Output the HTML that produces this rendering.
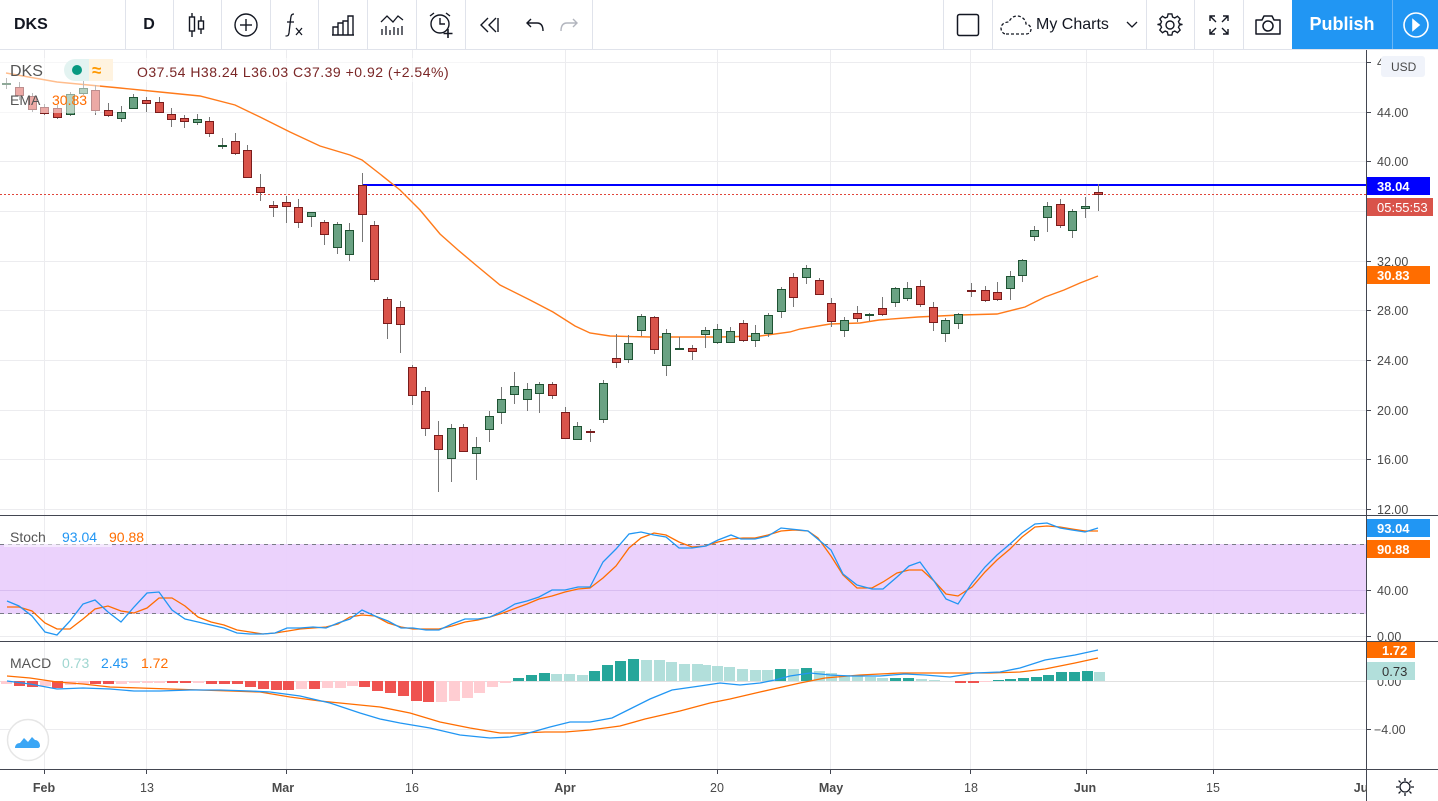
<!DOCTYPE html>
<html><head><meta charset="utf-8">
<style>
html,body{margin:0;padding:0;background:#fff;width:1438px;height:801px;overflow:hidden;font-family:"Liberation Sans",sans-serif;}
#tb{position:absolute;left:0;top:0;width:1438px;height:49px;border-bottom:1px solid #e0e3eb;background:#fff;}
.sep{position:absolute;top:0;width:1px;height:49px;background:#e0e3eb;}
.ic{position:absolute;top:0;height:49px;display:flex;align-items:center;justify-content:center;}
svg text{font-family:"Liberation Sans",sans-serif;}
</style></head><body>
<div id="tb">
 <div class="ic" style="left:14px;font-weight:bold;font-size:16px;color:#131722">DKS</div>
 <div class="sep" style="left:125px"></div>
 <div class="ic" style="left:125px;width:48px;font-size:16px;font-weight:bold;color:#131722">D</div>
 <div class="sep" style="left:173px"></div>
 <div class="ic" style="left:173px;width:48px"><svg width="24" height="28" viewBox="0 0 24 28" fill="none" stroke="#131722" stroke-width="1.4"><line x1="7" y1="2" x2="7" y2="26"/><rect x="4.5" y="6" width="5" height="14" fill="#fff"/><line x1="16" y1="5" x2="16" y2="23"/><rect x="13.5" y="10" width="5" height="8" fill="#fff"/></svg></div>
 <div class="sep" style="left:221px"></div>
 <div class="ic" style="left:221px;width:49px"><svg width="26" height="26" fill="none" stroke="#131722" stroke-width="1.4"><circle cx="13" cy="13" r="11"/><line x1="13" y1="7" x2="13" y2="19"/><line x1="7" y1="13" x2="19" y2="13"/></svg></div>
 <div class="sep" style="left:270px"></div>
 <div class="ic" style="left:270px;width:48px"><svg width="24" height="26" fill="none" stroke="#131722" stroke-width="1.3"><path d="M12 2c-3 0-3 2-3.5 6L7 21c-.5 3-1.5 3-3.5 3"/><line x1="5" y1="10" x2="12" y2="10"/><path d="M14 16l6 7M20 16l-6 7"/></svg></div>
 <div class="sep" style="left:318px"></div>
 <div class="ic" style="left:318px;width:49px"><svg width="24" height="24" fill="none" stroke="#131722" stroke-width="1.4"><path d="M2 22V14h5v8M7 22V10h5v12M12 22V8h5v14M17 22V3h5v19M1 22h22"/></svg></div>
 <div class="sep" style="left:367px"></div>
 <div class="ic" style="left:367px;width:49px"><svg width="26" height="24" fill="none" stroke="#131722" stroke-width="1.3"><path d="M2 9l6-6 6 6 5-6 5 4"/><path d="M3 16v6M7 13v9M11 17v5M15 14v8M19 15v7M23 13v9"/></svg></div>
 <div class="sep" style="left:416px"></div>
 <div class="ic" style="left:416px;width:49px"><svg width="28" height="28" fill="none" stroke="#131722" stroke-width="1.4"><circle cx="13" cy="13" r="9"/><path d="M13 7v6h5M3 5l4-3M23 5l-4-3"/><path d="M21 18v9M16.5 22.5h9" stroke-width="1.6"/></svg></div>
 <div class="sep" style="left:465px"></div>
 <div class="ic" style="left:465px;width:48px"><svg width="22" height="18" fill="none" stroke="#131722" stroke-width="1.4"><path d="M10 2L3 9l7 7M18 2l-7 7 7 7"/><line x1="20" y1="2" x2="20" y2="16"/></svg></div>
 <div class="ic" style="left:522px;width:26px"><svg width="20" height="16" fill="none" stroke="#131722" stroke-width="1.4"><path d="M6 2L2 6l4 4M2 6h10c4 0 6 3 6 8"/></svg></div>
 <div class="ic" style="left:556px;width:26px"><svg width="20" height="16" fill="none" stroke="#b2b5be" stroke-width="1.4"><path d="M14 2l4 4-4 4M18 6H8c-4 0-6 3-6 8"/></svg></div>
 <div class="sep" style="left:592px"></div>
 <div class="sep" style="left:943px"></div>
 <div class="ic" style="left:943px;width:49px"><svg width="24" height="24" fill="none" stroke="#131722" stroke-width="1.5"><rect x="1.5" y="1.5" width="21" height="21" rx="2"/></svg></div>
 <div class="sep" style="left:992px"></div>
 <div class="ic" style="left:1000px;width:32px"><svg width="32" height="22" fill="none" stroke="#131722" stroke-width="1.3" stroke-dasharray="3,2"><path d="M6 20h20c4 0 5-3 5-5s-2-5-5-5c0-4-4-8-9-8-4 0-7 3-8 6-5 0-8 3-8 6s2 6 5 6z"/></svg></div>
 <div class="ic" style="left:1036px;font-size:16px;color:#131722">My Charts</div>
 <div class="ic" style="left:1124px;width:16px"><svg width="12" height="8" fill="none" stroke="#131722" stroke-width="1.3"><path d="M1 1l5 5 5-5"/></svg></div>
 <div class="sep" style="left:1146px"></div>
 <div class="ic" style="left:1146px;width:48px"><svg width="26" height="26" viewBox="0 0 26 26" fill="none" stroke="#131722" stroke-width="1.4"><path d="M11 2h4l.7 3.2 2.3 1 2.8-1.8 2.8 2.8-1.8 2.8 1 2.3L26 13v0l-3.2 .7-1 2.3 1.8 2.8-2.8 2.8-2.8-1.8-2.3 1L15 24h-4l-.7-3.2-2.3-1-2.8 1.8-2.8-2.8 1.8-2.8-1-2.3L0 13l3.2-.7 1-2.3-1.8-2.8 2.8-2.8 2.8 1.8 2.3-1z" transform="translate(0.5,0) scale(0.96)"/><circle cx="13" cy="13" r="4"/></svg></div>
 <div class="sep" style="left:1194px"></div>
 <div class="ic" style="left:1194px;width:49px"><svg width="22" height="22" fill="none" stroke="#131722" stroke-width="1.4"><path d="M2 7V2h5M2 2l6 6M20 7V2h-5M20 2l-6 6M2 15v5h5M2 20l6-6M20 15v5h-5M20 20l-6-6"/></svg></div>
 <div class="sep" style="left:1243px"></div>
 <div class="ic" style="left:1243px;width:49px"><svg width="28" height="22" fill="none" stroke="#131722" stroke-width="1.5"><path d="M2 6h6l2-4h8l2 4h6v14H2z" stroke-linejoin="round"/><circle cx="14" cy="12" r="5"/></svg></div>
 <div style="position:absolute;left:1292px;top:0;width:100px;height:49px;background:#2196f3;color:#fff;font-size:18px;font-weight:bold;display:flex;align-items:center;justify-content:center">Publish</div>
 <div style="position:absolute;left:1392px;top:0;width:1px;height:49px;background:#6bb6f5"></div>
 <div style="position:absolute;left:1393px;top:0;width:45px;height:49px;background:#2196f3;display:flex;align-items:center;justify-content:center"><svg width="28" height="28" fill="none" stroke="#fff" stroke-width="1.6"><circle cx="14" cy="14" r="12"/><path d="M11 9l6 5-6 5z" fill="#fff"/></svg></div>
</div>

<svg width="1438" height="801" style="position:absolute;left:0;top:0" xmlns="http://www.w3.org/2000/svg">
<g stroke="#ececef" stroke-width="1">
<line x1="0" y1="62.5" x2="1366" y2="62.5"/><line x1="0" y1="112.5" x2="1366" y2="112.5"/><line x1="0" y1="161.5" x2="1366" y2="161.5"/><line x1="0" y1="211.5" x2="1366" y2="211.5"/><line x1="0" y1="261.5" x2="1366" y2="261.5"/><line x1="0" y1="310.5" x2="1366" y2="310.5"/><line x1="0" y1="360.5" x2="1366" y2="360.5"/><line x1="0" y1="410.5" x2="1366" y2="410.5"/><line x1="0" y1="459.5" x2="1366" y2="459.5"/><line x1="0" y1="509.5" x2="1366" y2="509.5"/>
<line x1="0" y1="636.5" x2="1366" y2="636.5"/><line x1="0" y1="729.5" x2="1366" y2="729.5"/>
<line x1="44.5" y1="50" x2="44.5" y2="770"/><line x1="146.5" y1="50" x2="146.5" y2="770"/><line x1="286.5" y1="50" x2="286.5" y2="770"/><line x1="412.5" y1="50" x2="412.5" y2="770"/><line x1="565.5" y1="50" x2="565.5" y2="770"/><line x1="717.5" y1="50" x2="717.5" y2="770"/><line x1="830.5" y1="50" x2="830.5" y2="770"/><line x1="970.5" y1="50" x2="970.5" y2="770"/><line x1="1086.5" y1="50" x2="1086.5" y2="770"/><line x1="1213.5" y1="50" x2="1213.5" y2="770"/>
</g>

<rect x="0" y="544" width="1366" height="70" fill="#ead0fc" opacity="0.95"/>
<line x1="0" y1="590.5" x2="1366" y2="590.5" stroke="#d8bdf0"/>
<line x1="0" y1="544.5" x2="1366" y2="544.5" stroke="#787b86" stroke-dasharray="4,4"/>
<line x1="0" y1="613.5" x2="1366" y2="613.5" stroke="#787b86" stroke-dasharray="4,4"/>

<line x1="0" y1="194.5" x2="1366" y2="194.5" stroke="#e0453a" stroke-dasharray="2,2"/>
<line x1="362" y1="185" x2="1366" y2="185" stroke="#0000ff" stroke-width="2"/>

<polyline fill="none" stroke="#ff7a1a" stroke-width="1.4" points="6,73 57,82 120,88 160,92 200,96 235,105 260,117 290,132 320,146 350,155 362,160 380,174 400,190 420,210 440,234 458,250 477,266 500,285 530,300 553,312 575,326 590,333 610,336 650,337 680,337 720,337 760,336 790,332 800,329 830,324 860,323 879,320 918,317 960,315 997,314 1025,307 1045,297 1064,290 1080,283 1098,276"/>

<g stroke="#777" stroke-width="1">
<line x1="6.5" y1="78" x2="6.5" y2="89"/><line x1="19.5" y1="82" x2="19.5" y2="100"/><line x1="32.5" y1="93" x2="32.5" y2="112"/><line x1="44.5" y1="104" x2="44.5" y2="115"/><line x1="57.5" y1="105" x2="57.5" y2="119"/><line x1="70.5" y1="92" x2="70.5" y2="116"/><line x1="83.5" y1="78" x2="83.5" y2="95"/><line x1="95.5" y1="85" x2="95.5" y2="115"/><line x1="108.5" y1="103" x2="108.5" y2="117"/><line x1="121.5" y1="106" x2="121.5" y2="122"/><line x1="133.5" y1="94" x2="133.5" y2="109"/><line x1="146.5" y1="97" x2="146.5" y2="112"/><line x1="159.5" y1="97" x2="159.5" y2="113"/><line x1="171.5" y1="108" x2="171.5" y2="127"/><line x1="184.5" y1="115" x2="184.5" y2="128"/><line x1="197.5" y1="114" x2="197.5" y2="125"/><line x1="209.5" y1="117" x2="209.5" y2="137"/><line x1="222.5" y1="138" x2="222.5" y2="149"/><line x1="235.5" y1="133" x2="235.5" y2="155"/><line x1="247.5" y1="145" x2="247.5" y2="178"/><line x1="260.5" y1="174" x2="260.5" y2="201"/><line x1="273.5" y1="201" x2="273.5" y2="217"/><line x1="286.5" y1="196" x2="286.5" y2="223"/><line x1="298.5" y1="199" x2="298.5" y2="228"/><line x1="311.5" y1="212" x2="311.5" y2="227"/><line x1="324.5" y1="220" x2="324.5" y2="245"/><line x1="337.5" y1="222" x2="337.5" y2="254"/><line x1="349.5" y1="223" x2="349.5" y2="261"/><line x1="362.5" y1="173" x2="362.5" y2="242"/><line x1="374.5" y1="221" x2="374.5" y2="282"/><line x1="387.5" y1="297" x2="387.5" y2="339"/><line x1="400.5" y1="301" x2="400.5" y2="353"/><line x1="412.5" y1="365" x2="412.5" y2="405"/><line x1="425.5" y1="387" x2="425.5" y2="436"/><line x1="438.5" y1="421" x2="438.5" y2="492"/><line x1="451.5" y1="424" x2="451.5" y2="482"/><line x1="463.5" y1="424" x2="463.5" y2="452"/><line x1="476.5" y1="437" x2="476.5" y2="480"/><line x1="489.5" y1="411" x2="489.5" y2="442"/><line x1="501.5" y1="387" x2="501.5" y2="424"/><line x1="514.5" y1="372" x2="514.5" y2="404"/><line x1="527.5" y1="383" x2="527.5" y2="411"/><line x1="539.5" y1="382" x2="539.5" y2="413"/><line x1="552.5" y1="382" x2="552.5" y2="399"/><line x1="565.5" y1="407" x2="565.5" y2="439"/><line x1="577.5" y1="422" x2="577.5" y2="439"/><line x1="590.5" y1="429" x2="590.5" y2="442"/><line x1="603.5" y1="380" x2="603.5" y2="423"/><line x1="616.5" y1="334" x2="616.5" y2="368"/><line x1="628.5" y1="335" x2="628.5" y2="363"/><line x1="641.5" y1="314" x2="641.5" y2="336"/><line x1="654.5" y1="316" x2="654.5" y2="354"/><line x1="666.5" y1="329" x2="666.5" y2="376"/><line x1="679.5" y1="337" x2="679.5" y2="350"/><line x1="692.5" y1="345" x2="692.5" y2="360"/><line x1="705.5" y1="327" x2="705.5" y2="348"/><line x1="717.5" y1="324" x2="717.5" y2="344"/><line x1="730.5" y1="327" x2="730.5" y2="342"/><line x1="743.5" y1="320" x2="743.5" y2="342"/><line x1="755.5" y1="325" x2="755.5" y2="347"/><line x1="768.5" y1="313" x2="768.5" y2="337"/><line x1="781.5" y1="287" x2="781.5" y2="318"/><line x1="793.5" y1="273" x2="793.5" y2="307"/><line x1="806.5" y1="265" x2="806.5" y2="284"/><line x1="819.5" y1="278" x2="819.5" y2="294"/><line x1="831.5" y1="298" x2="831.5" y2="327"/><line x1="844.5" y1="317" x2="844.5" y2="337"/><line x1="857.5" y1="306" x2="857.5" y2="322"/><line x1="869.5" y1="313" x2="869.5" y2="321"/><line x1="882.5" y1="297" x2="882.5" y2="316"/><line x1="895.5" y1="287" x2="895.5" y2="307"/><line x1="907.5" y1="282" x2="907.5" y2="301"/><line x1="920.5" y1="280" x2="920.5" y2="307"/><line x1="933.5" y1="302" x2="933.5" y2="331"/><line x1="945.5" y1="318" x2="945.5" y2="342"/><line x1="958.5" y1="313" x2="958.5" y2="329"/><line x1="971.5" y1="283" x2="971.5" y2="297"/><line x1="985.5" y1="286" x2="985.5" y2="302"/><line x1="997.5" y1="282" x2="997.5" y2="301"/><line x1="1010.5" y1="271" x2="1010.5" y2="300"/><line x1="1022.5" y1="259" x2="1022.5" y2="282"/><line x1="1034.5" y1="226" x2="1034.5" y2="241"/><line x1="1047.5" y1="202" x2="1047.5" y2="232"/><line x1="1060.5" y1="199" x2="1060.5" y2="228"/><line x1="1072.5" y1="209" x2="1072.5" y2="238"/><line x1="1085.5" y1="197" x2="1085.5" y2="218"/><line x1="1098.5" y1="184" x2="1098.5" y2="211"/>
</g>
<g stroke-width="1">
<g fill="#d9534a" stroke="#7a1c1c">
<rect x="15.5" y="87.5" width="8" height="8"/><rect x="28.5" y="96.5" width="8" height="13"/><rect x="40.5" y="107.5" width="8" height="6"/><rect x="53.5" y="108.5" width="8" height="9"/><rect x="91.5" y="90.5" width="8" height="20"/><rect x="104.5" y="110.5" width="8" height="5"/><rect x="142.5" y="100.5" width="8" height="3"/><rect x="155.5" y="102.5" width="8" height="10"/><rect x="167.5" y="114.5" width="8" height="5"/><rect x="180.5" y="118.5" width="8" height="3"/><rect x="205.5" y="121.5" width="8" height="12"/><rect x="231.5" y="141.5" width="8" height="12"/><rect x="243.5" y="150.5" width="8" height="27"/><rect x="256.5" y="187.5" width="8" height="5"/><rect x="269.5" y="205.5" width="8" height="2"/><rect x="282.5" y="202.5" width="8" height="4"/><rect x="294.5" y="207.5" width="8" height="15"/><rect x="320.5" y="222.5" width="8" height="12"/><rect x="358.5" y="185.5" width="8" height="29"/><rect x="370.5" y="225.5" width="8" height="54"/><rect x="383.5" y="299.5" width="8" height="24"/><rect x="396.5" y="307.5" width="8" height="17"/><rect x="408.5" y="367.5" width="8" height="28"/><rect x="421.5" y="391.5" width="8" height="37"/><rect x="434.5" y="435.5" width="8" height="14"/><rect x="459.5" y="427.5" width="8" height="24"/><rect x="548.5" y="384.5" width="8" height="11"/><rect x="561.5" y="412.5" width="8" height="26"/><rect x="586.5" y="431.5" width="8" height="1"/><rect x="612.5" y="358.5" width="8" height="4"/><rect x="650.5" y="317.5" width="8" height="32"/><rect x="688.5" y="348.5" width="8" height="3"/><rect x="739.5" y="323.5" width="8" height="17"/><rect x="789.5" y="277.5" width="8" height="20"/><rect x="815.5" y="280.5" width="8" height="14"/><rect x="827.5" y="303.5" width="8" height="18"/><rect x="853.5" y="313.5" width="8" height="5"/><rect x="878.5" y="308.5" width="8" height="6"/><rect x="916.5" y="286.5" width="8" height="18"/><rect x="929.5" y="307.5" width="8" height="15"/><rect x="967.5" y="290.5" width="8" height="1"/><rect x="981.5" y="290.5" width="8" height="10"/><rect x="993.5" y="292.5" width="8" height="7"/><rect x="1056.5" y="204.5" width="8" height="21"/><rect x="1094.5" y="192.5" width="8" height="2"/>
</g>
<g fill="#6aa283" stroke="#1e5232">
<rect x="2.5" y="83.5" width="8" height="1"/><rect x="66.5" y="94.5" width="8" height="20"/><rect x="79.5" y="88.5" width="8" height="5"/><rect x="117.5" y="112.5" width="8" height="6"/><rect x="129.5" y="97.5" width="8" height="11"/><rect x="193.5" y="119.5" width="8" height="3"/><rect x="218.5" y="145.5" width="8" height="1"/><rect x="307.5" y="212.5" width="8" height="4"/><rect x="333.5" y="224.5" width="8" height="23"/><rect x="345.5" y="230.5" width="8" height="24"/><rect x="447.5" y="428.5" width="8" height="30"/><rect x="472.5" y="447.5" width="8" height="6"/><rect x="485.5" y="416.5" width="8" height="13"/><rect x="497.5" y="399.5" width="8" height="13"/><rect x="510.5" y="386.5" width="8" height="8"/><rect x="523.5" y="389.5" width="8" height="10"/><rect x="535.5" y="384.5" width="8" height="9"/><rect x="573.5" y="426.5" width="8" height="13"/><rect x="599.5" y="383.5" width="8" height="36"/><rect x="624.5" y="343.5" width="8" height="16"/><rect x="637.5" y="316.5" width="8" height="14"/><rect x="662.5" y="333.5" width="8" height="32"/><rect x="675.5" y="348.5" width="8" height="1"/><rect x="701.5" y="330.5" width="8" height="4"/><rect x="713.5" y="329.5" width="8" height="13"/><rect x="726.5" y="331.5" width="8" height="11"/><rect x="751.5" y="333.5" width="8" height="7"/><rect x="764.5" y="315.5" width="8" height="18"/><rect x="777.5" y="289.5" width="8" height="22"/><rect x="802.5" y="268.5" width="8" height="9"/><rect x="840.5" y="320.5" width="8" height="10"/><rect x="865.5" y="314.5" width="8" height="1"/><rect x="891.5" y="288.5" width="8" height="14"/><rect x="903.5" y="288.5" width="8" height="10"/><rect x="941.5" y="320.5" width="8" height="13"/><rect x="954.5" y="314.5" width="8" height="9"/><rect x="1006.5" y="276.5" width="8" height="12"/><rect x="1018.5" y="260.5" width="8" height="15"/><rect x="1030.5" y="230.5" width="8" height="6"/><rect x="1043.5" y="206.5" width="8" height="11"/><rect x="1068.5" y="211.5" width="8" height="19"/><rect x="1081.5" y="206.5" width="8" height="2"/>
</g></g>

<!-- legend veil -->
<rect x="0" y="58" width="100" height="55" fill="#fff" opacity="0.5"/>
<rect x="100" y="58" width="380" height="24" fill="#fff" opacity="0.5"/>
<text x="10" y="76" font-size="16" fill="#555">DKS</text>
<rect x="64" y="59" width="49" height="22" rx="11" fill="#e3f3f1"/>
<rect x="89" y="59" width="24" height="22" fill="#fff3e0"/>
<rect x="100" y="59" width="13" height="22" rx="11" fill="#fff3e0"/>
<circle cx="77" cy="70" r="5" fill="#089981"/>
<text x="92" y="76" font-size="17" font-weight="bold" fill="#ff9800">≈</text>
<text x="137" y="77" font-size="14" fill="#7a2626" letter-spacing="0.5">O37.54  H38.24  L36.03  C37.39  +0.92  (+2.54%)</text>
<text x="10" y="105" font-size="14" fill="#555">EMA</text>
<text x="52" y="105" font-size="14" fill="#ff6d00">30.83</text>

<line x1="0" y1="515.5" x2="1438" y2="515.5" stroke="#434651"/>
<line x1="0" y1="641.5" x2="1438" y2="641.5" stroke="#434651"/>
<line x1="0" y1="769.5" x2="1438" y2="769.5" stroke="#434651"/>
<line x1="1366.5" y1="50" x2="1366.5" y2="801" stroke="#434651"/>

<polyline fill="none" stroke="#ff6d00" stroke-width="1.3" points="7,607 19,607 32,611 45,623 57,629 70,629 83,619 95,609 108,606 121,611 134,613 147,608 159,598 172,598 185,606 198,617 211,622 224,625 237,630 250,632 263,634 275,633 288,631 300,629 313,628 326,627 338,624 350,617 362,615 375,616 388,623 401,627 413,629 426,629 439,629 452,626 465,622 478,620 490,617 503,613 516,608 527,604 539,599 552,596 565,592 578,589 590,588 603,578 616,566 629,548 641,538 654,533 666,535 679,542 692,547 705,546 718,542 731,539 743,538 755,538 768,535 781,531 794,530 808,531 818,538 831,556 843,575 857,588 872,588 883,582 897,573 909,570 922,570 934,581 946,594 958,596 972,587 985,572 997,560 1010,549 1022,537 1035,527 1047,526 1060,527 1072,529 1085,531 1098,531"/>
<polyline fill="none" stroke="#2196f3" stroke-width="1.3" points="7,601 19,606 32,616 45,632 57,635 70,621 83,604 95,600 108,612 121,622 134,607 147,593 159,592 172,610 185,619 198,622 211,625 224,628 237,633 250,634 263,634 275,633 287,628 300,628 313,627 326,628 338,623 350,619 362,610 375,616 388,621 401,628 413,628 426,630 439,630 452,624 465,619 478,619 490,617 503,611 515,604 527,601 539,597 552,590 565,590 578,587 590,587 603,562 616,549 629,534 641,532 654,535 666,537 679,548 692,548 706,546 718,540 731,535 741,539 755,539 768,536 781,528 800,530 808,531 831,550 843,574 857,585 872,589 883,589 897,577 909,566 920,562 934,581 946,599 958,604 972,583 985,567 997,555 1010,544 1022,533 1035,524 1047,523 1060,528 1072,530 1085,532 1098,528"/>
<rect x="4" y="540" width="108" height="7" fill="#fff" opacity="0.5"/>
<text x="10" y="542" font-size="14" fill="#555">Stoch</text>
<text x="62" y="542" font-size="14" fill="#2196f3">93.04</text>
<text x="109" y="542" font-size="14" fill="#ff6d00">90.88</text>

<line x1="0" y1="681.5" x2="1366" y2="681.5" stroke="#e0e0e0"/>
<g>
<g fill="#ef5350">
<rect x="14" y="681" width="11" height="5"/><rect x="27" y="681" width="11" height="6"/><rect x="52" y="681" width="11" height="7"/><rect x="90" y="681" width="11" height="3"/><rect x="103" y="681" width="11" height="3"/><rect x="167" y="681" width="11" height="2"/><rect x="180" y="681" width="11" height="2"/><rect x="206" y="681" width="11" height="3"/><rect x="219" y="681" width="11" height="3"/><rect x="232" y="681" width="11" height="3"/><rect x="245" y="681" width="11" height="6"/><rect x="258" y="681" width="11" height="8"/><rect x="271" y="681" width="11" height="9"/><rect x="283" y="681" width="11" height="9"/><rect x="309" y="681" width="11" height="8"/><rect x="359" y="681" width="11" height="6"/><rect x="372" y="681" width="11" height="10"/><rect x="385" y="681" width="11" height="12"/><rect x="398" y="681" width="11" height="15"/><rect x="411" y="681" width="11" height="20"/><rect x="423" y="681" width="11" height="21"/><rect x="955" y="681" width="11" height="2"/><rect x="968" y="681" width="11" height="2"/>
</g>
<g fill="#ffcdd2">
<rect x="1" y="681" width="11" height="3"/><rect x="40" y="681" width="11" height="5"/><rect x="65" y="681" width="11" height="4"/><rect x="78" y="681" width="11" height="3"/><rect x="116" y="681" width="11" height="3"/><rect x="129" y="681" width="11" height="2"/><rect x="142" y="681" width="11" height="2"/><rect x="154" y="681" width="11" height="2"/><rect x="193" y="681" width="11" height="2"/><rect x="296" y="681" width="11" height="8"/><rect x="322" y="681" width="11" height="7"/><rect x="335" y="681" width="11" height="7"/><rect x="347" y="681" width="11" height="5"/><rect x="436" y="681" width="11" height="21"/><rect x="449" y="681" width="11" height="20"/><rect x="462" y="681" width="11" height="17"/><rect x="474" y="681" width="11" height="12"/><rect x="487" y="681" width="11" height="6"/><rect x="500" y="681" width="11" height="2"/><rect x="980" y="681" width="11" height="1"/>
</g>
<g fill="#26a69a">
<rect x="513" y="678" width="11" height="3"/><rect x="526" y="675" width="11" height="6"/><rect x="539" y="673" width="11" height="8"/><rect x="589" y="671" width="11" height="10"/><rect x="602" y="665" width="11" height="16"/><rect x="615" y="661" width="11" height="20"/><rect x="628" y="659" width="11" height="22"/><rect x="775" y="669" width="11" height="12"/><rect x="801" y="668" width="11" height="13"/><rect x="890" y="678" width="11" height="3"/><rect x="903" y="678" width="11" height="3"/><rect x="993" y="680" width="11" height="1"/><rect x="1005" y="679" width="11" height="2"/><rect x="1018" y="678" width="11" height="3"/><rect x="1031" y="677" width="11" height="4"/><rect x="1043" y="675" width="11" height="6"/><rect x="1056" y="672" width="11" height="9"/><rect x="1069" y="672" width="11" height="9"/><rect x="1082" y="671" width="11" height="10"/>
</g>
<g fill="#b2dfdb">
<rect x="551" y="674" width="11" height="7"/><rect x="564" y="674" width="11" height="7"/><rect x="577" y="675" width="11" height="6"/><rect x="641" y="660" width="11" height="21"/><rect x="654" y="660" width="11" height="21"/><rect x="666" y="662" width="11" height="19"/><rect x="679" y="664" width="11" height="17"/><rect x="692" y="664" width="11" height="17"/><rect x="700" y="665" width="11" height="16"/><rect x="712" y="666" width="11" height="15"/><rect x="724" y="667" width="11" height="14"/><rect x="737" y="669" width="11" height="12"/><rect x="750" y="670" width="11" height="11"/><rect x="762" y="670" width="11" height="11"/><rect x="788" y="669" width="11" height="12"/><rect x="814" y="671" width="11" height="10"/><rect x="826" y="673" width="11" height="8"/><rect x="839" y="675" width="11" height="6"/><rect x="852" y="676" width="11" height="5"/><rect x="865" y="677" width="11" height="4"/><rect x="877" y="678" width="11" height="3"/><rect x="916" y="679" width="11" height="2"/><rect x="929" y="680" width="11" height="1"/><rect x="1094" y="672" width="11" height="9"/>
</g></g>
<polyline fill="none" stroke="#ff6d00" stroke-width="1.3" points="7,676 30,678 57,682 83,684 110,687 140,688 170,689 200,690 230,691 260,692 290,697 320,701 350,704 380,707 410,713 440,722 470,728 500,733 520,733 545,732 565,732 590,730 620,726 645,719 680,711 710,703 730,699 760,692 800,683 825,678 860,675 900,673 950,673 990,673 1020,672 1045,669 1075,663 1098,658"/>
<polyline fill="none" stroke="#2196f3" stroke-width="1.3" points="7,681 30,684 57,689 83,688 110,689 134,691 160,691 190,690 220,690 250,691 270,692 300,696 330,703 360,713 380,719 400,723 430,728 460,735 490,738 510,737 525,734 550,727 570,722 590,722 612,718 630,709 650,699 672,690 700,686 720,683 740,685 760,683 775,680 790,676 810,673 830,675 850,676 880,676 905,674 925,675 950,677 975,673 1000,672 1020,668 1045,660 1075,655 1098,650"/>
<text x="10" y="668" font-size="14" fill="#555">MACD</text>
<text x="62" y="668" font-size="14" fill="#9fd6d0">0.73</text>
<text x="101" y="668" font-size="14" fill="#2196f3">2.45</text>
<text x="141" y="668" font-size="14" fill="#ff6d00">1.72</text>

<circle cx="28" cy="740" r="20.5" fill="#fff" stroke="#e6e6e6" stroke-width="1.5"/>
<path d="M15 748c0-3 2-5 5-5l4-5 4 4 4-5 3 3c3 0 5 3 5 6 0 1-1 2-2 2H17c-1 0-2 0-2 0z" fill="#3ba6f5"/>

<g font-size="12.5" fill="#4a4a4a">
<g stroke="#434651"><line x1="1366" y1="62.5" x2="1371" y2="62.5"/><line x1="1366" y1="112.5" x2="1371" y2="112.5"/><line x1="1366" y1="161.5" x2="1371" y2="161.5"/><line x1="1366" y1="261.5" x2="1371" y2="261.5"/><line x1="1366" y1="310.5" x2="1371" y2="310.5"/><line x1="1366" y1="360.5" x2="1371" y2="360.5"/><line x1="1366" y1="410.5" x2="1371" y2="410.5"/><line x1="1366" y1="459.5" x2="1371" y2="459.5"/><line x1="1366" y1="509.5" x2="1371" y2="509.5"/><line x1="1366" y1="590.5" x2="1371" y2="590.5"/><line x1="1366" y1="636.5" x2="1371" y2="636.5"/><line x1="1366" y1="729.5" x2="1371" y2="729.5"/></g>
<text x="1377" y="67">48.00</text>
<text x="1377" y="117">44.00</text><text x="1377" y="166">40.00</text><text x="1377" y="266">32.00</text><text x="1377" y="315">28.00</text><text x="1377" y="365">24.00</text><text x="1377" y="415">20.00</text><text x="1377" y="464">16.00</text><text x="1377" y="514">12.00</text>
<text x="1377" y="595">40.00</text><text x="1377" y="641">0.00</text><text x="1377" y="686">0.00</text><text x="1374" y="734">−4.00</text>
</g>
<rect x="1381" y="56" width="44" height="21" rx="3" fill="#f0f3fa"/>
<text x="1391" y="71" font-size="12" fill="#4a4a4a">USD</text>
<g font-size="13" font-weight="bold" fill="#fff">
<rect x="1367" y="177" width="63" height="18" fill="#0000ff"/><text x="1377" y="191">38.04</text>
<rect x="1367" y="198" width="66" height="18" fill="#d9534a"/><text x="1377" y="212" font-weight="normal">05:55:53</text>
<rect x="1367" y="266" width="63" height="18" fill="#ff6d00"/><text x="1377" y="280">30.83</text>
<rect x="1367" y="519" width="63" height="18" fill="#2196f3"/><text x="1377" y="533">93.04</text>
<rect x="1367" y="540" width="63" height="18" fill="#ff6d00"/><text x="1377" y="554">90.88</text>
<rect x="1367" y="642" width="48" height="16" fill="#ff6d00"/><text x="1382" y="655">1.72</text>
<rect x="1367" y="662" width="48" height="18" fill="#b2dfdb"/><text x="1382" y="676" fill="#333" font-weight="normal">0.73</text>
</g>

<g stroke="#434651"><line x1="44.5" y1="770" x2="44.5" y2="774"/><line x1="146.5" y1="770" x2="146.5" y2="774"/><line x1="286.5" y1="770" x2="286.5" y2="774"/><line x1="412.5" y1="770" x2="412.5" y2="774"/><line x1="565.5" y1="770" x2="565.5" y2="774"/><line x1="717.5" y1="770" x2="717.5" y2="774"/><line x1="830.5" y1="770" x2="830.5" y2="774"/><line x1="970.5" y1="770" x2="970.5" y2="774"/><line x1="1086.5" y1="770" x2="1086.5" y2="774"/><line x1="1213.5" y1="770" x2="1213.5" y2="774"/></g>
<g font-size="12.5" fill="#4a4a4a" text-anchor="middle">
<text x="44" y="792" font-weight="bold">Feb</text><text x="147" y="792">13</text><text x="283" y="792" font-weight="bold">Mar</text><text x="412" y="792">16</text><text x="565" y="792" font-weight="bold">Apr</text><text x="717" y="792">20</text><text x="831" y="792" font-weight="bold">May</text><text x="971" y="792">18</text><text x="1085" y="792" font-weight="bold">Jun</text><text x="1213" y="792">15</text><text x="1361" y="792" font-weight="bold">Ju</text>
</g>
<rect x="1367" y="771" width="71" height="30" fill="#fff"/>
<g transform="translate(1405,787)" fill="none" stroke="#131722" stroke-width="1.3"><circle r="5"/><path d="M0-9v3M0 6v3M-9 0h3M6 0h3M-6.4-6.4l2 2M4.4 4.4l2 2M-6.4 6.4l2-2M4.4-4.4l2-2"/></g>
</svg>
</body></html>
